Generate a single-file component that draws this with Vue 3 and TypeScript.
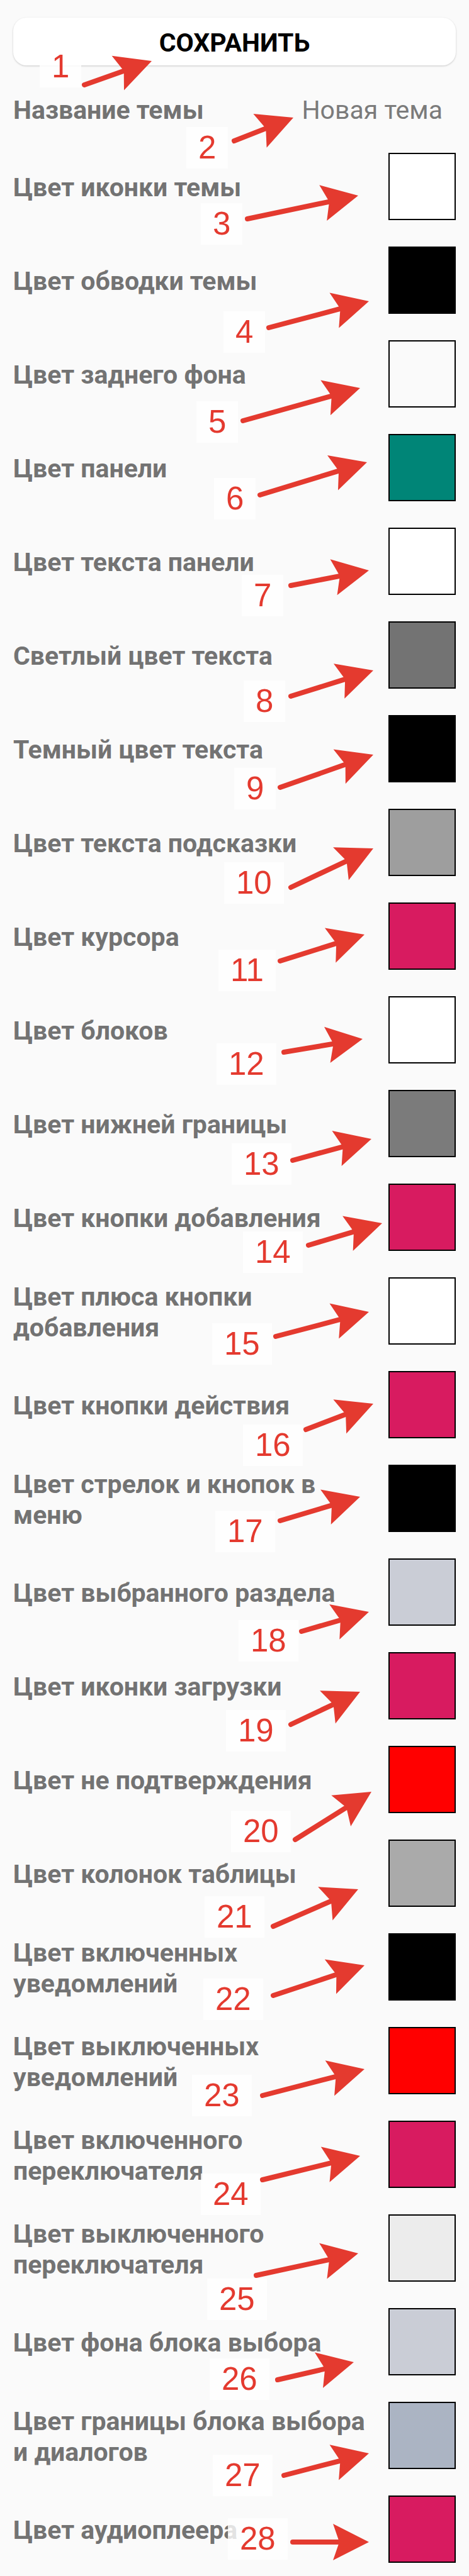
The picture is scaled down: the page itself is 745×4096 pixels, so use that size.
<script setup lang="ts">
import { ref } from 'vue'

interface ColorSetting {
  label: string
  color: string
}

interface Callout {
  badge: [number, number]
  tail: [number, number]
  tip: [number, number]
}

const themeName = ref('')

const settings = ref<ColorSetting[]>([
  { label: 'Цвет иконки темы', color: '#ffffff' },
  { label: 'Цвет обводки темы', color: '#000000' },
  { label: 'Цвет заднего фона', color: '#fafafa' },
  { label: 'Цвет панели', color: '#008577' },
  { label: 'Цвет текста панели', color: '#ffffff' },
  { label: 'Светлый цвет текста', color: '#737373' },
  { label: 'Темный цвет текста', color: '#000000' },
  { label: 'Цвет текста подсказки', color: '#9e9e9e' },
  { label: 'Цвет курсора', color: '#d81b60' },
  { label: 'Цвет блоков', color: '#ffffff' },
  { label: 'Цвет нижней границы', color: '#7b7b7b' },
  { label: 'Цвет кнопки добавления', color: '#d81b60' },
  { label: 'Цвет плюса кнопки добавления', color: '#ffffff' },
  { label: 'Цвет кнопки действия', color: '#d81b60' },
  { label: 'Цвет стрелок и кнопок в меню', color: '#000000' },
  { label: 'Цвет выбранного раздела', color: '#cacdd6' },
  { label: 'Цвет иконки загрузки', color: '#d81b60' },
  { label: 'Цвет не подтверждения', color: '#ff0000' },
  { label: 'Цвет колонок таблицы', color: '#aaaaaa' },
  { label: 'Цвет включенных уведомлений', color: '#000000' },
  { label: 'Цвет выключенных уведомлений', color: '#ff0000' },
  { label: 'Цвет включенного переключателя', color: '#d81b60' },
  { label: 'Цвет выключенного переключателя', color: '#ececec' },
  { label: 'Цвет фона блока выбора', color: '#cacdd6' },
  { label: 'Цвет границы блока выбора и диалогов', color: '#abb4c3' },
  { label: 'Цвет аудиоплеера', color: '#d81b60' },
])

// Numbered callouts, placed freely over the form.
const callouts: Callout[] = [
  { badge: [63, 73], tail: [134, 135], tip: [241, 97] },
  { badge: [296, 202], tail: [372, 224], tip: [466, 187] },
  { badge: [319, 323], tail: [393, 348], tip: [569, 311] },
  { badge: [355, 495], tail: [427, 521], tip: [586, 479] },
  { badge: [312, 638], tail: [386, 669], tip: [572, 617] },
  { badge: [340, 760], tail: [413, 787], tip: [583, 735] },
  { badge: [384, 914], tail: [462, 931], tip: [586, 907] },
  { badge: [387, 1082], tail: [462, 1107], tip: [593, 1066] },
  { badge: [372, 1221], tail: [445, 1252], tip: [593, 1200] },
  { badge: [356, 1371], tail: [462, 1411], tip: [593, 1349] },
  { badge: [347, 1510], tail: [445, 1528], tip: [579, 1486] },
  { badge: [344, 1659], tail: [451, 1673], tip: [576, 1652] },
  { badge: [368, 1818], tail: [465, 1845], tip: [590, 1811] },
  { badge: [386, 1958], tail: [490, 1980], tip: [607, 1945] },
  { badge: [337, 2104], tail: [438, 2125], tip: [586, 2086] },
  { badge: [386, 2265], tail: [486, 2273], tip: [593, 2232] },
  { badge: [342, 2402], tail: [445, 2418], tip: [572, 2380] },
  { badge: [379, 2576], tail: [479, 2594], tip: [586, 2563] },
  { badge: [359, 2719], tail: [462, 2742], tip: [572, 2690] },
  { badge: [367, 2879], tail: [469, 2925], tip: [590, 2849] },
  { badge: [325, 3015], tail: [434, 3063], tip: [569, 3004] },
  { badge: [323, 3146], tail: [434, 3173], tip: [579, 3125] },
  { badge: [305, 3299], tail: [417, 3332], tip: [579, 3290] },
  { badge: [319, 3456], tail: [417, 3466], tip: [572, 3428] },
  { badge: [329, 3623], tail: [407, 3618], tip: [569, 3583] },
  { badge: [333, 3750], tail: [441, 3784], tip: [562, 3756] },
  { badge: [338, 3903], tail: [451, 3936], tip: [586, 3901] },
  { badge: [362, 4004], tail: [465, 4042], tip: [586, 4042] },
]

function arrowTransform({ tail, tip }: Callout): string {
  const angle = (Math.atan2(tip[1] - tail[1], tip[0] - tail[0]) * 180) / Math.PI
  return `translate(${tip[0]} ${tip[1]}) rotate(${angle})`
}

function arrowLength({ tail, tip }: Callout): number {
  return Math.hypot(tip[0] - tail[0], tip[1] - tail[1])
}
</script>

<template>
  <main class="page">
    <form class="form" @submit.prevent>
      <button class="save" type="submit">СОХРАНИТЬ</button>

      <div class="name-row">
        <label class="label" for="theme-name">Название темы</label>
        <input id="theme-name" v-model="themeName" class="name-input" type="text" placeholder="Новая тема" />
      </div>

      <div v-for="(item, i) in settings" :key="item.label" class="color-row">
        <label class="label" :for="`color-${i}`">{{ item.label }}</label>
        <input :id="`color-${i}`" v-model="item.color" class="swatch" type="color" />
      </div>
    </form>

    <div class="callouts">
      <span
        v-for="(c, i) in callouts"
        :key="i"
        class="badge"
        :style="{ left: `${c.badge[0]}px`, top: `${c.badge[1]}px` }"
      >{{ i + 1 }}</span>
      <svg class="arrows" aria-hidden="true">
        <g v-for="(c, i) in callouts" :key="i" :transform="arrowTransform(c)">
          <line :x1="-arrowLength(c)" y1="0" x2="-44" y2="0" />
          <path d="M0 0L-57 -29L-47 0L-57 29Z" />
        </g>
      </svg>
    </div>
  </main>
</template>

<style>
body {
  margin: 0;
  background: #fafafa;
}
</style>

<style scoped>
.page {
  position: relative;
  overflow: hidden;
  background: #fafafa;
  color: #737373;
  font-family: Roboto, "Liberation Sans", sans-serif;
  font-size: 41px;
  line-height: 49px;
}

.form {
  display: flex;
  flex-direction: column;
  padding: 28px 21px 0;
}

.save {
  height: 76px;
  padding: 4px 0 0;
  border: 0;
  border-radius: 21px;
  background: #fff;
  box-shadow: 0 1px 3px rgba(0, 0, 0, 0.2);
  color: #000;
  font: inherit;
  font-weight: 700;
}

.name-row {
  display: flex;
  align-items: center;
  justify-content: space-between;
  height: 49px;
  margin: 47px 0 22px;
}

.label {
  flex: 1;
  min-width: 0;
  font-weight: 700;
}

.name-input {
  width: 250px;
  height: 49px;
  padding: 0 21px 0 0;
  border: 0;
  outline: 0;
  background: transparent;
  color: #737373;
  font: inherit;
  text-align: right;
}

.name-input::placeholder {
  color: #7b7b7b;
  opacity: 1;
}

.color-row {
  display: flex;
  align-items: center;
  gap: 21px;
  min-height: 149px;
}

.color-row .label {
  padding-top: 4px;
}

.swatch {
  flex: none;
  appearance: none;
  box-sizing: border-box;
  width: 107px;
  height: 107px;
  padding: 0;
  border: 2px solid #000;
  background: none;
}

.swatch::-webkit-color-swatch-wrapper {
  padding: 0;
}

.swatch::-webkit-color-swatch {
  border: 0;
  border-radius: 0;
}

.callouts {
  position: absolute;
  inset: 0;
  pointer-events: none;
}

.badge {
  position: absolute;
  padding: 0 19px;
  background: rgba(255, 255, 255, 0.8);
  color: #e43a2f;
  font-family: "Liberation Sans", Arial, sans-serif;
  font-size: 51px;
  line-height: 66px;
}

.arrows {
  position: absolute;
  inset: 0;
  width: 100%;
  height: 100%;
  fill: #e43a2f;
}

.arrows line {
  stroke: #e43a2f;
  stroke-width: 8;
  stroke-linecap: round;
}
</style>
